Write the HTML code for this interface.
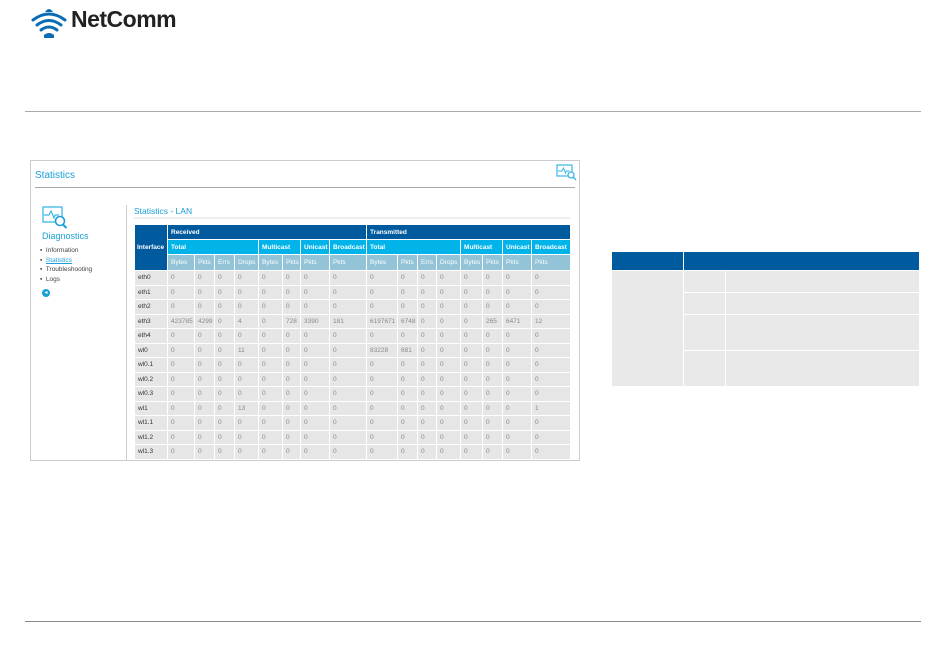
<!DOCTYPE html>
<html><head><meta charset="utf-8"><style>
*{margin:0;padding:0;box-sizing:border-box}
body{width:950px;height:660px;background:#fff;position:relative;font-family:"Liberation Sans",sans-serif;overflow:hidden}
.abs{position:absolute}
table{border-collapse:collapse;table-layout:fixed}
#t{left:134px;top:224px;width:436px;font-size:6.5px}
#t td{border:1px solid #fff;padding:0 0 0 3px;white-space:nowrap;overflow:hidden;height:14.5px;color:#8a8a8a}
#t td.n{color:#333}
#t .h1 td{background:#005a9e;color:#fff;height:15px;font-weight:600}
#t .h2 td{background:#00b4ea;color:#fff;height:15px;font-weight:600}
#t .h3 td{background:#92c3d6;color:#fff;height:16px}
#t td.if{background:#005a9e;color:#fff;font-weight:600;padding:0 2px}
#t tbody td{background:#e6e6e6}
#r{left:611px;top:251px;width:308px}
#r td{border:1px solid #fff;background:#e9e9e9}
</style></head><body>
<svg class="abs" style="left:29px;top:4px" width="40" height="36" viewBox="0 0 40 36">
<g fill="none" stroke="#0b6cb5" stroke-width="3" stroke-linecap="round">
<path d="M4 16 Q20 4 36 16"/><path d="M8 21 Q20 12 32 21"/><path d="M12 26 Q20 20 28 26"/>
</g>
<path d="M16 8 Q20 2 24 8Z" fill="#0b6cb5"/>
<path d="M15 31 Q20 27 25 31 L25 34 L15 34Z" fill="#0b6cb5"/>
</svg>
<div class="abs" style="left:71px;top:6px;font-size:23px;font-weight:bold;color:#222;letter-spacing:-0.5px">NetComm</div>
<div class="abs" style="left:25px;top:111px;width:896px;height:1px;background:#aaa"></div>
<div class="abs" style="left:25px;top:621px;width:896px;height:1px;background:#888"></div>
<div class="abs" style="left:30px;top:160px;width:550px;height:301px;border:1px solid #ccc"></div>
<div class="abs" style="left:35px;top:170px;font-size:10px;color:#1aa0d8">Statistics</div>
<div class="abs" style="left:35px;top:187px;width:540px;height:1px;background:#aaa"></div>
<svg class="abs" style="left:556px;top:164px" width="22" height="17" viewBox="0 0 22 17"><rect x="1" y="1" width="15" height="11" fill="none" stroke="#3bb8e6" stroke-width="1.2"/><path d="M2 7h4l1.5-3 2 5 1-2h3" fill="none" stroke="#3bb8e6"/><circle cx="15" cy="11" r="3" fill="#fff" stroke="#3bb8e6" stroke-width="1.3"/><path d="M17 13l3 3" stroke="#3bb8e6" stroke-width="1.5"/></svg>
<svg class="abs" style="left:42px;top:206px" width="26" height="24" viewBox="0 0 26 24"><rect x="1" y="1" width="19" height="15" fill="none" stroke="#3bb8e6" stroke-width="1.3"/><path d="M2 9h5l2-4 3 7 1-3h4" fill="none" stroke="#3bb8e6" stroke-width="1.2"/><circle cx="18" cy="15" r="4.5" fill="#fff" stroke="#1aa0d8" stroke-width="1.6"/><path d="M21 18.5l3.5 3.5" stroke="#1aa0d8" stroke-width="2"/></svg>
<div class="abs" style="left:42px;top:231px;font-size:9px;color:#1aa0d8">Diagnostics</div>
<div class="abs" style="left:40px;top:246px;font-size:6.5px;color:#444;line-height:9.5px">
<div>▪&nbsp; Information</div><div>▪&nbsp; <span style="color:#1aa0d8;text-decoration:underline">Statistics</span></div><div>▪&nbsp; Troubleshooting</div><div>▪&nbsp; Logs</div></div>
<div class="abs" style="left:42px;top:289px;width:8px;height:8px;border-radius:50%;background:#1aa0d8;color:#fff;font-size:6px;line-height:8px;text-align:center">◂</div>
<div class="abs" style="left:126px;top:205px;width:1px;height:255px;background:#ccc"></div>
<div class="abs" style="left:134px;top:206px;font-size:8.5px;color:#1aa0d8">Statistics - LAN</div>
<div class="abs" style="left:134px;top:217px;width:436px;height:2px;background:#eee"></div>
<table id="t" class="abs">
<colgroup><col style="width:33px"><col style="width:27px"><col style="width:20px"><col style="width:20px"><col style="width:24px"><col style="width:24px"><col style="width:18px"><col style="width:29px"><col style="width:37px"><col style="width:31px"><col style="width:20px"><col style="width:19px"><col style="width:24px"><col style="width:22px"><col style="width:20px"><col style="width:29px"><col style="width:39px"></colgroup>
<tr class="h1"><td class="if" rowspan="3">Interface</td><td colspan="8">Received</td><td colspan="8">Transmitted</td></tr>
<tr class="h2"><td colspan="4">Total</td><td colspan="2">Multicast</td><td>Unicast</td><td>Broadcast</td><td colspan="4">Total</td><td colspan="2">Multicast</td><td>Unicast</td><td>Broadcast</td></tr>
<tr class="h3"><td>Bytes</td><td>Pkts</td><td>Errs</td><td>Drops</td><td>Bytes</td><td>Pkts</td><td>Pkts</td><td>Pkts</td><td>Bytes</td><td>Pkts</td><td>Errs</td><td>Drops</td><td>Bytes</td><td>Pkts</td><td>Pkts</td><td>Pkts</td></tr>
<tbody>
<tr><td class="n">eth0</td><td>0</td><td>0</td><td>0</td><td>0</td><td>0</td><td>0</td><td>0</td><td>0</td><td>0</td><td>0</td><td>0</td><td>0</td><td>0</td><td>0</td><td>0</td><td>0</td></tr>
<tr><td class="n">eth1</td><td>0</td><td>0</td><td>0</td><td>0</td><td>0</td><td>0</td><td>0</td><td>0</td><td>0</td><td>0</td><td>0</td><td>0</td><td>0</td><td>0</td><td>0</td><td>0</td></tr>
<tr><td class="n">eth2</td><td>0</td><td>0</td><td>0</td><td>0</td><td>0</td><td>0</td><td>0</td><td>0</td><td>0</td><td>0</td><td>0</td><td>0</td><td>0</td><td>0</td><td>0</td><td>0</td></tr>
<tr><td class="n">eth3</td><td>423785</td><td>4299</td><td>0</td><td>4</td><td>0</td><td>728</td><td>3390</td><td>181</td><td>6197671</td><td>6748</td><td>0</td><td>0</td><td>0</td><td>265</td><td>6471</td><td>12</td></tr>
<tr><td class="n">eth4</td><td>0</td><td>0</td><td>0</td><td>0</td><td>0</td><td>0</td><td>0</td><td>0</td><td>0</td><td>0</td><td>0</td><td>0</td><td>0</td><td>0</td><td>0</td><td>0</td></tr>
<tr><td class="n">wl0</td><td>0</td><td>0</td><td>0</td><td>11</td><td>0</td><td>0</td><td>0</td><td>0</td><td>83228</td><td>681</td><td>0</td><td>0</td><td>0</td><td>0</td><td>0</td><td>0</td></tr>
<tr><td class="n">wl0.1</td><td>0</td><td>0</td><td>0</td><td>0</td><td>0</td><td>0</td><td>0</td><td>0</td><td>0</td><td>0</td><td>0</td><td>0</td><td>0</td><td>0</td><td>0</td><td>0</td></tr>
<tr><td class="n">wl0.2</td><td>0</td><td>0</td><td>0</td><td>0</td><td>0</td><td>0</td><td>0</td><td>0</td><td>0</td><td>0</td><td>0</td><td>0</td><td>0</td><td>0</td><td>0</td><td>0</td></tr>
<tr><td class="n">wl0.3</td><td>0</td><td>0</td><td>0</td><td>0</td><td>0</td><td>0</td><td>0</td><td>0</td><td>0</td><td>0</td><td>0</td><td>0</td><td>0</td><td>0</td><td>0</td><td>0</td></tr>
<tr><td class="n">wl1</td><td>0</td><td>0</td><td>0</td><td>13</td><td>0</td><td>0</td><td>0</td><td>0</td><td>0</td><td>0</td><td>0</td><td>0</td><td>0</td><td>0</td><td>0</td><td>1</td></tr>
<tr><td class="n">wl1.1</td><td>0</td><td>0</td><td>0</td><td>0</td><td>0</td><td>0</td><td>0</td><td>0</td><td>0</td><td>0</td><td>0</td><td>0</td><td>0</td><td>0</td><td>0</td><td>0</td></tr>
<tr><td class="n">wl1.2</td><td>0</td><td>0</td><td>0</td><td>0</td><td>0</td><td>0</td><td>0</td><td>0</td><td>0</td><td>0</td><td>0</td><td>0</td><td>0</td><td>0</td><td>0</td><td>0</td></tr>
<tr><td class="n">wl1.3</td><td>0</td><td>0</td><td>0</td><td>0</td><td>0</td><td>0</td><td>0</td><td>0</td><td>0</td><td>0</td><td>0</td><td>0</td><td>0</td><td>0</td><td>0</td><td>0</td></tr>
</tbody></table>
<table id="r" class="abs">
<colgroup><col style="width:72px"><col style="width:42px"><col style="width:194px"></colgroup>
<tr><td style="background:#005a9e;height:19px"></td><td colspan="2" style="background:#005a9e"></td></tr>
<tr><td rowspan="4" style="height:116px"></td><td style="height:22px"></td><td></td></tr>
<tr><td style="height:22px"></td><td></td></tr>
<tr><td style="height:36px"></td><td></td></tr>
<tr><td style="height:36px"></td><td></td></tr>
</table>
</body></html>
